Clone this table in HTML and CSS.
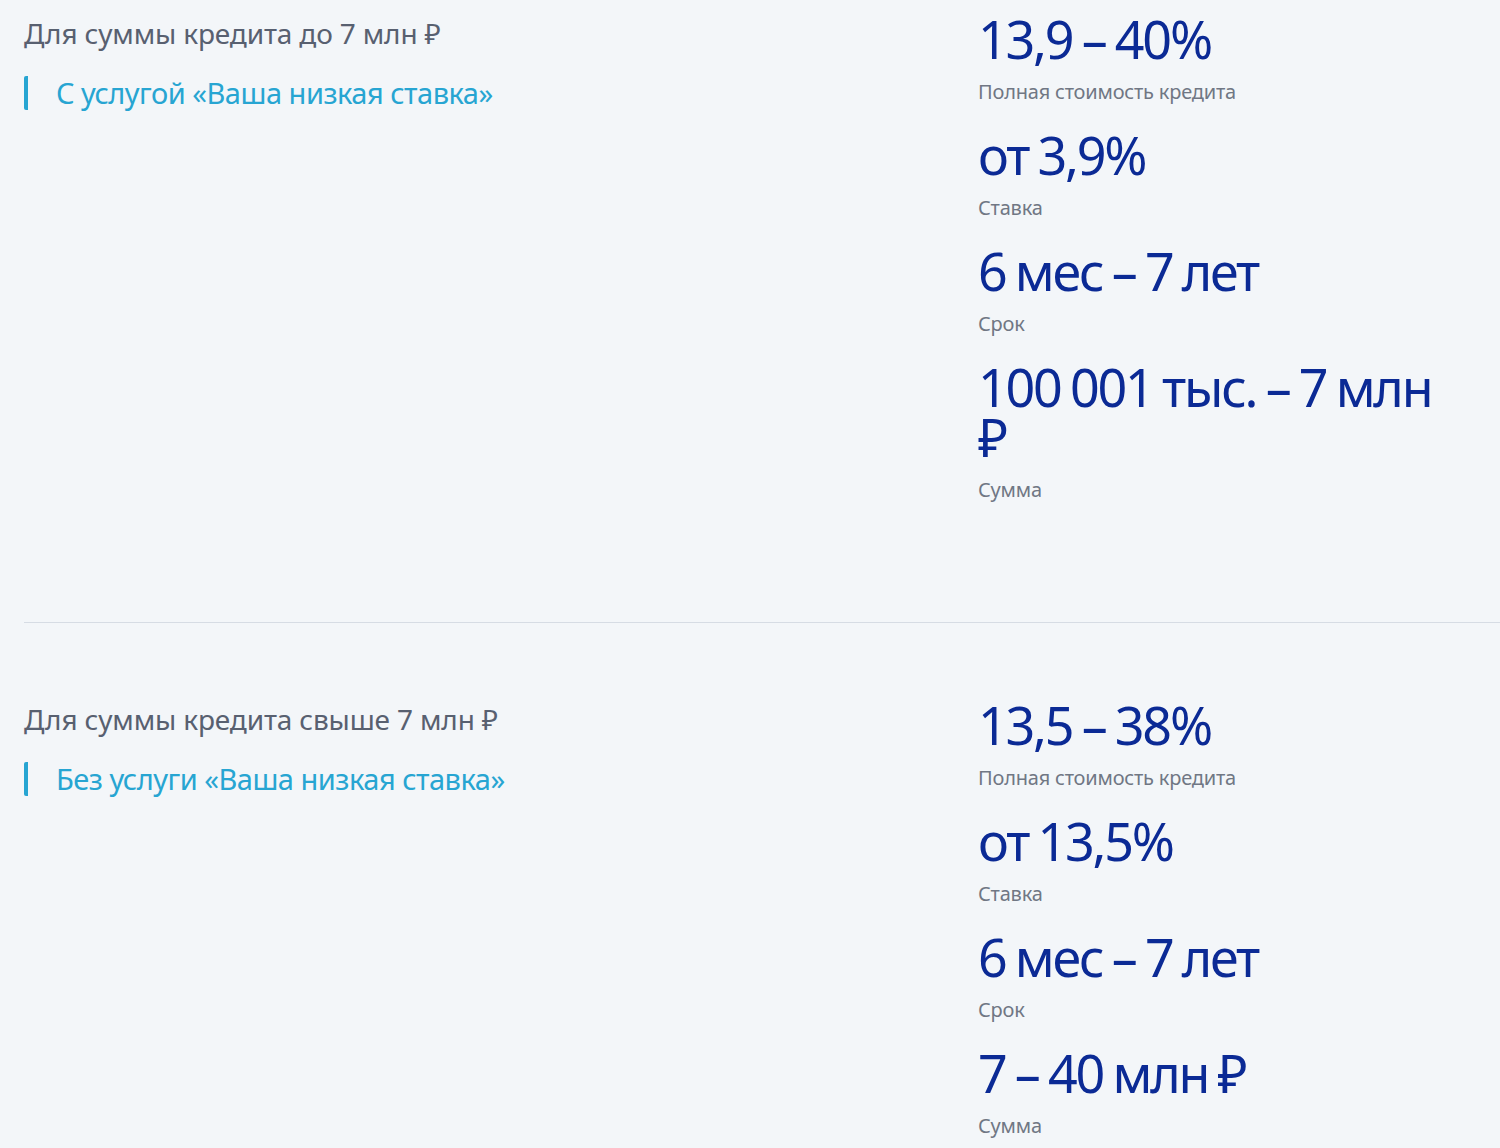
FILE: index.html
```html
<!DOCTYPE html>
<html lang="ru">
<head>
<meta charset="utf-8">
<link rel="stylesheet" href="styles.css">
</head>
<body>
<div class="page">
  <section class="offer">
    <div class="offer-left">
      <div class="offer-title">Для суммы кредита до 7 млн ₽</div>
      <div class="offer-sub">С услугой «Ваша низкая ставка»</div>
    </div>
    <div class="offer-right">
      <div class="stat"><div class="stat-value">13,9 – 40%</div><div class="stat-label">Полная стоимость кредита</div></div>
      <div class="stat"><div class="stat-value">от 3,9%</div><div class="stat-label">Ставка</div></div>
      <div class="stat"><div class="stat-value">6 мес – 7 лет</div><div class="stat-label">Срок</div></div>
      <div class="stat"><div class="stat-value">100 001 тыс. – 7 млн ₽</div><div class="stat-label">Сумма</div></div>
    </div>
  </section>
  <hr class="divider">
  <section class="offer">
    <div class="offer-left">
      <div class="offer-title">Для суммы кредита свыше 7 млн ₽</div>
      <div class="offer-sub">Без услуги «Ваша низкая ставка»</div>
    </div>
    <div class="offer-right">
      <div class="stat"><div class="stat-value">13,5 – 38%</div><div class="stat-label">Полная стоимость кредита</div></div>
      <div class="stat"><div class="stat-value">от 13,5%</div><div class="stat-label">Ставка</div></div>
      <div class="stat"><div class="stat-value">6 мес – 7 лет</div><div class="stat-label">Срок</div></div>
      <div class="stat"><div class="stat-value">7 – 40 млн ₽</div><div class="stat-label">Сумма</div></div>
    </div>
  </section>
</div>
</body>
</html>
```

FILE: styles.css
```css
html, body {
  margin: 0;
  padding: 0;
  background: #f3f6f9;
}
body {
  font-family: "Noto Sans", "Open Sans", sans-serif;
}
.page {
  padding: 14px 0 0 24px;
}
.offer {
  display: grid;
  grid-template-columns: 954px 460px;
}
.offer-left {
  display: flex;
  flex-direction: column;
  gap: 24px;
}
.offer-title {
  font-size: 28px;
  line-height: 38px;
  color: #586070;
  letter-spacing: -0.15px;
}
.offer-sub {
  font-size: 29px;
  line-height: 34px;
  color: #27a5d2;
  border-left: 4px solid #27a5d2;
  border-radius: 2px;
  padding-left: 28px;
  letter-spacing: -0.5px;
}
.offer-right {
  display: flex;
  flex-direction: column;
  gap: 24px;
  padding-bottom: 118px;
}
.stat-value {
  font-size: 52px;
  line-height: 50px;
  color: #0b2a95;
  letter-spacing: -2.2px;
  word-spacing: -2px;
}
.stat-label {
  font-size: 20px;
  line-height: 28px;
  color: #707784;
  letter-spacing: -0.2px;
  margin-top: 14px;
}
.divider {
  border: none;
  border-top: 1px solid #d6dce4;
  margin: 0 0 77px 0;
}
```
